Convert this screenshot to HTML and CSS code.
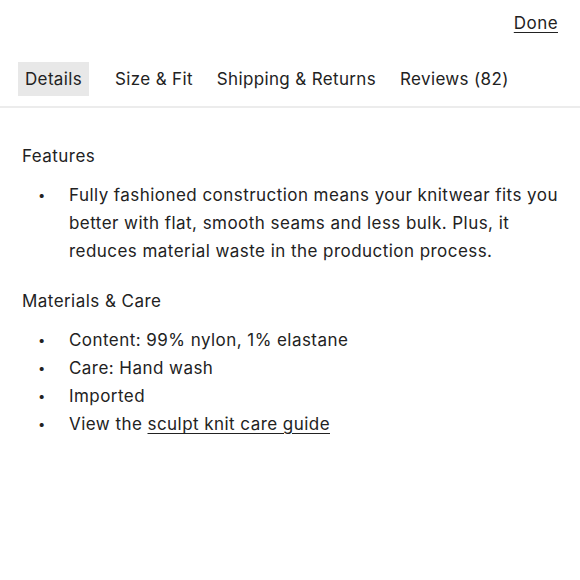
FILE: index.html
```html
<!DOCTYPE html>
<html lang="en">
<head>
<meta charset="utf-8">
<title>Product details</title>
<link rel="stylesheet" href="styles.css">
</head>
<body>
<div class="sheet">
  <header class="top">
    <a class="done" href="#">Done</a>
  </header>
  <nav class="tabs">
    <span class="tab active">Details</span>
    <span class="tab">Size &amp; Fit</span>
    <span class="tab">Shipping &amp; Returns</span>
    <span class="tab">Reviews (82)</span>
  </nav>
  <main class="content">
    <h2 class="heading">Features</h2>
    <ul class="list">
      <li>Fully fashioned construction means your knitwear fits you better with flat, smooth seams and less bulk. Plus, it reduces material waste in the production process.</li>
    </ul>
    <h2 class="heading">Materials &amp; Care</h2>
    <ul class="list">
      <li>Content: 99% nylon, 1% elastane</li>
      <li>Care: Hand wash</li>
      <li>Imported</li>
      <li>View the <a class="link" href="#">sculpt knit care guide</a></li>
    </ul>
  </main>
</div>
</body>
</html>
```
FILE: styles.css
```css
html, body {
  margin: 0;
  padding: 0;
  background: #ffffff;
}
body {
  font-family: "Inter", "Noto Sans", sans-serif;
  color: #222222;
  font-size: 17px;
  letter-spacing: 0.45px;
}
.top {
  display: flex;
  justify-content: flex-end;
  padding: 11px 22px 0 0;
  height: 51px;
  box-sizing: border-box;
}
.done {
  color: #222222;
  text-decoration: underline;
  text-underline-offset: 3px;
  line-height: 24px;
}
.tabs {
  display: flex;
  gap: 10px;
  padding: 11px 18px 10px;
  border-bottom: 2px solid #ececec;
  letter-spacing: 0.35px;
}
.tab {
  padding: 0 7px;
  line-height: 34px;
}
.tab.active {
  background: #e8e8e8;
  margin-right: 9px;
}
.content {
  padding: 34px 22px 0 22px;
}
.heading {
  font-size: 17px;
  font-weight: 400;
  margin: 0;
  line-height: 28px;
}
.list {
  list-style: none;
  margin: 11px 0 22px;
  padding: 0 0 0 47px;
  line-height: 28px;
}
.list li::before {
  content: "\2022";
  display: inline-block;
  vertical-align: top;
  width: 29px;
  margin-left: -29px;
  font-size: 13px;
  line-height: 28px;
  text-indent: -2px;
}
.link {
  color: #222222;
  text-decoration: underline;
  text-underline-offset: 3px;
}
```
